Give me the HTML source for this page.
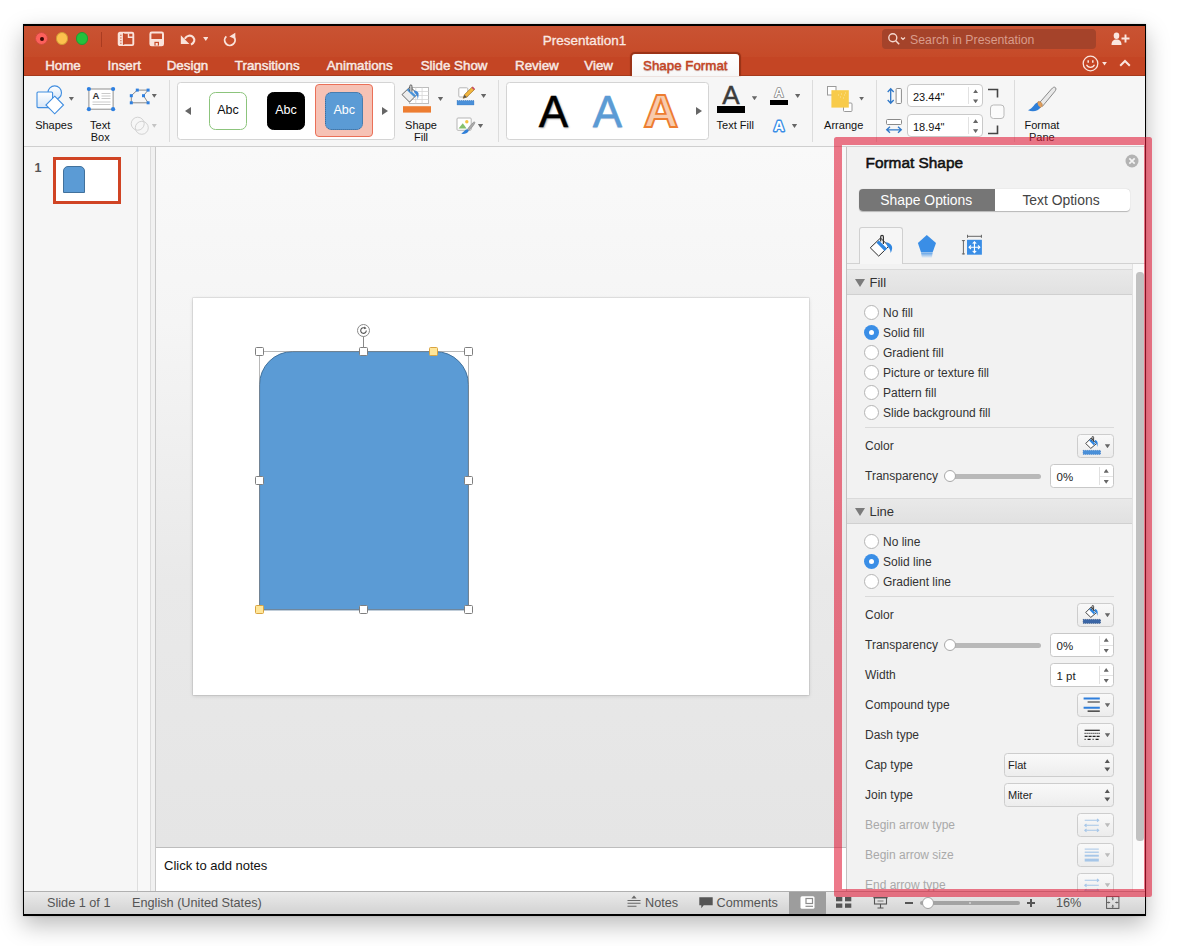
<!DOCTYPE html>
<html><head><meta charset="utf-8">
<style>
*{box-sizing:border-box;margin:0;padding:0}
html,body{width:1177px;height:946px;background:#fff;overflow:hidden;font-family:"Liberation Sans",sans-serif;}
.abs{position:absolute}
#win{position:absolute;left:23px;top:24px;width:1123px;height:892px;background:#000;box-shadow:0 9px 22px rgba(0,0,0,.27),0 0 2px rgba(0,0,0,.18);}
#inner{position:absolute;left:1px;top:2px;width:1121px;height:888px;background:#f6f6f6;overflow:hidden}
/* coordinates inside #inner: page x-24, y-26 */
#title{position:absolute;left:0;top:0;width:1121px;height:31px;background:linear-gradient(#c95333,#c64a28);}
#tabs{position:absolute;left:0;top:31px;width:1121px;height:19px;background:#c44524;border-bottom:1px solid #a63a1c}
.tab{position:absolute;top:32.100px;font-size:13.350px;color:#fbe9e3;white-space:nowrap;-webkit-text-stroke:.5px #fbe9e3;line-height:16px;text-shadow:0 .5px 1px rgba(120,30,10,.5)}
#ribbon{position:absolute;left:0;top:50px;width:1121px;height:71px;background:#f6f6f6;border-bottom:1px solid #cfcfcf}
.lbl{position:absolute;font-size:11px;line-height:12px;color:#111;text-align:center;white-space:nowrap}
.sep{position:absolute;margin-left:-1px;width:1px;background:#dcdcdc;top:54px;height:62px}
.dd{position:absolute;margin-left:.3px;width:5.400px;height:4px;color:#666;background:currentColor;clip-path:polygon(0 0,100% 0,50% 100%)}
.st{top:870px;font-size:12.700px;color:#555;line-height:15px;white-space:nowrap}

.pt{font-size:12px;line-height:15px;margin-top:1px;color:#333;white-space:nowrap}
.pt.dis{color:#a9a9a9}
.rd{left:840px;width:15.300px;height:15.300px;border-radius:8px;background:#fff;border:1px solid #b4b4b4}
.rd.on{background:#3a8ee6;border:none}
.rd.on:after{content:"";position:absolute;left:5px;top:5px;width:5px;height:5px;border-radius:3px;background:#fff}
.hr{left:841px;width:249px;height:1px;background:#dadada}
.pbtn{left:1053.300px;width:36.400px;height:23.400px;margin-top:-.3px;border:1px solid #cdcdcd;border-radius:3.500px;background:linear-gradient(#f9f9f9,#ececec)}
.spin{left:1026px;width:63.800px;height:23.300px;margin-top:-.2px;border:1px solid #c8c8c8;border-radius:3.500px;background:#fff;font-size:11.500px;color:#222}
.spin span{position:absolute;left:5.500px;top:6px;line-height:13px}
.spin i{position:absolute;left:47.600px;top:2px;width:1px;height:17.500px;background:#e0e0e0}
.spin:after{content:"";position:absolute;left:48.500px;top:10.500px;width:13px;height:1px;background:#e4e4e4}
.selb{left:980px;width:110px;height:23.600px;margin-top:-.6px;border:1px solid #cdcdcd;border-radius:3.500px;background:linear-gradient(#f9f9f9,#ededed);font-size:11px;color:#222}
.selb span{position:absolute;left:3px;top:4.600px;line-height:13px}
.seg{top:163px;height:22px;line-height:23px;font-size:13.900px;text-align:center;white-space:nowrap}
.sech{left:823px;width:285px;height:25.500px;background:linear-gradient(#e9e9e9,#e1e1e1);border-top:1px solid #dadada;border-bottom:1px solid #d0d0d0;font-size:13px;color:#333;line-height:25.500px;padding-left:22.500px}
.sech i{position:absolute;left:8px;top:8.500px;width:0;height:0;border-left:5px solid transparent;border-right:5px solid transparent;border-top:8px solid #7b7b7b}

.gal{background:#fff;border:1px solid #d4d4d4;border-radius:3.500px}
.abc{width:38px;height:38px;border-radius:6.500px;font-size:12.500px;line-height:35.500px;text-align:center}
.wa{top:63.500px;width:40px;text-align:center;font-size:44px;line-height:44px}
.rin{margin-left:-1px;margin-top:-.5px;width:76px;height:23.300px;border:1px solid #c9c9c9;border-radius:4px;background:#fff;font-size:11px;color:#111}
.rin span{position:absolute;left:5.500px;top:6px;line-height:13px}
.rin i{position:absolute;left:60.500px;top:2px;width:1px;height:17px;background:#e2e2e2}

.up,.dn{position:absolute;width:5.200px;height:3.900px;background:#666}
.up{clip-path:polygon(50% 0,100% 100%,0 100%)}
.dn{clip-path:polygon(0 0,100% 0,50% 100%)}
.spin .up{left:52.600px;top:3.600px}
.spin .dn{left:52.600px;top:14.600px}
.rin .up{left:65.500px;top:4.200px}
.rin .dn{left:65.500px;top:14.200px}
.selb .up{left:99.400px;top:5.200px;width:5.800px;height:4.200px;background:#555}
.selb .dn{left:99.400px;top:13.300px;width:5.800px;height:4.200px;background:#555}
</style></head><body>
<div id="win"><div id="inner">
<div id="title"></div>
<div id="tabs"></div>
<div id="ribbon"></div>
<div class="abs" style="left:11.4px;top:6.3px;width:12.800px;height:12.800px;border-radius:7px;background:#fc605b;border:1px solid #cf4a40"></div><div class="abs" style="left:31.5px;top:6.3px;width:12.800px;height:12.800px;border-radius:7px;background:#fdc14d;border:1px solid #d09a34"></div><div class="abs" style="left:51.5px;top:6.3px;width:12.800px;height:12.800px;border-radius:7px;background:#24c23c;border:1px solid #1e9e32"></div><div class="abs" style="left:16.1px;top:11.0px;width:3.800px;height:3.800px;margin:-.2px;border-radius:2px;background:#3a0605"></div><div class="abs" style="left:77.0px;top:6px;width:1px;height:15px;background:rgba(140,40,20,.5)"></div><svg class="abs" style="left:93.0px;top:5.0px" width="18" height="16" viewBox="0 0 18 16"><rect x="1.700" y="1.800" width="14.600" height="12.300" rx="1.200" fill="none" stroke="#fae3db" stroke-width="1.900"/><rect x="1.700" y="1.800" width="4.200" height="12.300" fill="#fae3db"/><path d="M3.200 4.200h1.300M3.200 7h1.300M3.200 9.800h1.300M3.200 12.200h1.300" stroke="#c9532f" stroke-width="1.100"/><path d="M6.700 2v12" stroke="#c24a28" stroke-width=".9"/><path d="M11.500 2.500v3.800h4.500" fill="none" stroke="#fae3db" stroke-width="1.400"/></svg><svg class="abs" style="left:125.3px;top:5.0px" width="16" height="16" viewBox="0 0 16 16"><rect x="1.400" y="1.600" width="12.600" height="12.600" rx="1.300" fill="none" stroke="#fae3db" stroke-width="2"/><rect x="1.400" y="8" width="12.600" height="6.200" fill="#fae3db"/><rect x="5.400" y="10.800" width="4.600" height="3.800" fill="#c64a28"/><rect x="6.600" y="12" width="2.200" height="2.600" fill="#fae3db"/></svg><svg class="abs" style="left:155.5px;top:6.0px" width="17" height="15" viewBox="0 0 17 15"><path d="M4.800 6.800c1.800-3.400 6-4.200 8.400-1.600 2.200 2.500 1.200 5.600-2.200 7.400" fill="none" stroke="#fae3db" stroke-width="2.100"/><path d="M0.800 3.300v8.700h8.600z" fill="#fae3db"/></svg><div class="dd" style="left:178.8px;top:11.0px;color:#fae3db;"></div><svg class="abs" style="left:198.5px;top:6.0px" width="14" height="16" viewBox="0 0 14 16"><path d="M3.300 4.400a5.200 5.200 0 1 0 7.800 0.800" fill="none" stroke="#fae3db" stroke-width="1.900"/><path d="M12.300 0.800v6.200l-6-2.600z" fill="#fae3db"/></svg><div class="abs" style="left:0;top:6.500px;width:1121px;text-align:center;font-size:13.500px;color:#fbe9e3;line-height:15px;-webkit-text-stroke:.3px #fbe9e3">Presentation1</div><div class="abs" style="left:858.0px;top:2.900px;width:214px;height:19.800px;border-radius:4px;background:#a5432a"></div><svg class="abs" style="left:863.0px;top:6.0px" width="20" height="14" viewBox="0 0 20 14"><circle cx="5.800" cy="5.800" r="4" fill="none" stroke="#f6d9cf" stroke-width="1.400"/><path d="M8.800 8.800l3.400 3.400" stroke="#f6d9cf" stroke-width="1.600"/><path d="M14 5.500l2 2 2-2" fill="none" stroke="#f6d9cf" stroke-width="1.200"/></svg><div class="abs" style="left:886.0px;top:6.0px;font-size:12.300px;color:#d99c8a;line-height:15px;margin-top:1px;white-space:nowrap">Search in Presentation</div><svg class="abs" style="left:1087.0px;top:6.0px" width="20" height="14" viewBox="0 0 20 14"><ellipse cx="5.500" cy="3.800" rx="2.800" ry="3.300" fill="#fae6df"/><path d="M0.500 13c0-4 2-5.500 5-5.500s5 1.500 5 5.500z" fill="#fae6df"/><path d="M14.500 2.500v8M10.500 6.500h8" stroke="#fae6df" stroke-width="1.900"/></svg><svg class="abs" style="left:1057.5px;top:28.5px" width="17" height="17" viewBox="0 0 17 17"><circle cx="8.500" cy="8.500" r="7.300" fill="none" stroke="#fae6df" stroke-width="1.300"/><path d="M6.200 5.200v2.500M10.800 5.200v2.500" stroke="#fae6df" stroke-width="1.500"/><path d="M4.500 9.800c1.500 3.300 6.500 3.300 8 0" fill="none" stroke="#fae6df" stroke-width="1.300"/></svg><div class="dd" style="left:1077.5px;top:35.5px;color:#fae6df"></div><svg class="abs" style="left:1095.0px;top:33.0px" width="12" height="8" viewBox="0 0 12 8"><path d="M1.200 6.800l4.800-4.800 4.800 4.800" fill="none" stroke="#fae6df" stroke-width="2"/></svg><div class="tab" style="left:21.2px">Home</div><div class="tab" style="left:83.5px">Insert</div><div class="tab" style="left:142.7px">Design</div><div class="tab" style="left:210.8px">Transitions</div><div class="tab" style="left:302.7px">Animations</div><div class="tab" style="left:396.7px">Slide Show</div><div class="tab" style="left:491.0px">Review</div><div class="tab" style="left:560.3px">View</div><div class="abs" style="left:606.0px;top:26.200px;width:111px;height:24.300px;background:linear-gradient(#fff,#f7f7f7);border:2px solid #9b3317;border-bottom:none;border-radius:5px 5px 0 0;box-shadow:0 0 1px #9b3317"></div><div class="tab" style="left:619.0px;color:#c7431f;-webkit-text-stroke:.35px #c7431f">Shape Format</div>
<svg class="abs" style="left:11.0px;top:57.7px" width="30" height="32" viewBox="0 0 30 32"><defs><linearGradient id="g1" x1="0" y1="0" x2="0" y2="1"><stop offset="0" stop-color="#fff"/><stop offset="1" stop-color="#d6e6f7"/></linearGradient></defs><circle cx="19.700" cy="8.700" r="6.800" fill="url(#g1)" stroke="#3f8de0" stroke-width="1.100"/><rect x="2" y="8" width="15.600" height="15.600" rx="1" fill="url(#g1)" stroke="#3f8de0" stroke-width="1.100"/><path d="M19.700 12.200l8.800 8.800-8.800 8.800-8.800-8.800z" fill="#fff" stroke="#3f8de0" stroke-width="1.100"/></svg><div class="dd" style="left:44.4px;top:70.7px;color:#666"></div><div class="lbl" style="left:-0.2px;top:92.9px;width:60px">Shapes</div><svg class="abs" style="left:62.0px;top:60.0px" width="30" height="26" viewBox="0 0 30 26"><rect x="2.900" y="3" width="24.200" height="20.200" fill="#fff" stroke="#8e8e8e" stroke-width="1"/><text x="6.500" y="13.300" font-family="Liberation Sans" font-size="9.500" font-weight="bold" fill="#333">A</text><path d="M15.500 7.500h9M15.500 10h9M15.500 12.500h9M6.500 16h18M6.500 18.500h18" stroke="#c4c4c4" stroke-width=".9"/><g fill="#2f80e0"><circle cx="2.900" cy="3" r="2.100"/><circle cx="27.100" cy="3" r="2.100"/><circle cx="2.900" cy="23.200" r="2.100"/><circle cx="27.100" cy="23.200" r="2.100"/></g></svg><div class="lbl" style="left:46.2px;top:92.9px;width:60px">Text<br>Box</div><svg class="abs" style="left:104.5px;top:62.2px" width="22" height="18" viewBox="0 0 22 18"><path d="M2.300 14.800V7.700l6-5.600h10.800l-4.600 5.600 4.600 7.100z" fill="none" stroke="#8a8a8a" stroke-width="1" stroke-dasharray="0"/><g fill="#2f80e0"><rect x="6.800" y=".6" width="3" height="3"/><rect x="17.600" y=".6" width="3" height="3"/><rect x=".8" y="6.200" width="3" height="3"/><rect x="13" y="6.200" width="3" height="3"/><rect x=".8" y="13.300" width="3" height="3"/><rect x="17.600" y="13.300" width="3" height="3"/></g></svg><div class="dd" style="left:127.3px;top:67.7px;color:#666"></div><svg class="abs" style="left:105.5px;top:90.0px" width="22" height="20" viewBox="0 0 22 20"><circle cx="7.700" cy="7.700" r="6.500" fill="none" stroke="#d2d2d2" stroke-width="1"/><circle cx="11.800" cy="11.800" r="6.500" fill="none" stroke="#d2d2d2" stroke-width="1"/></svg><div class="dd" style="left:127.3px;top:97.7px;color:#c4c4c4"></div><div class="sep" style="left:145.5px"></div><div class="abs gal" style="left:153.3px;top:56.4px;width:217.500px;height:57.800px"></div><div class="abs" style="left:160.5px;top:80.8px;width:0;height:0;border-top:4px solid transparent;border-bottom:4px solid transparent;border-right:6px solid #666"></div><div class="abs" style="left:357.8px;top:80.8px;width:0;height:0;border-top:4px solid transparent;border-bottom:4px solid transparent;border-left:6px solid #666"></div><div class="abs abc" style="left:185.0px;top:66.0px;background:#fff;border:1px solid #8cc47c;color:#111">Abc</div><div class="abs abc" style="left:243.0px;top:66.0px;background:#000;border:1px solid #000;color:#fff">Abc</div><div class="abs" style="left:291.0px;top:58.3px;width:58px;height:53px;background:#f6c2b5;border:1px solid #ea7058;border-radius:4px"></div><div class="abs abc" style="left:301.2px;top:66.0px;background:#5b9bd5;border:1px dotted #35608c;color:#fff">Abc</div><svg class="abs" style="left:376.0px;top:56.0px" width="32" height="32" viewBox="0 0 32 32"><rect x="9.500" y="5.500" width="19" height="16" fill="#fff" stroke="#bdbdbd" stroke-width="1"/><path d="M9.500 9.500h19M9.500 13.500h19M9.500 17.500h19M15.800 5.500v16M22.100 5.500v16" stroke="#d5d5d5" stroke-width=".8"/><path d="M2 12.600L10.100 4.800l7.500 7.100-8.100 8.200z" fill="#ececec" stroke="#666" stroke-width="1" stroke-linejoin="round"/><path d="M8.440 6.400L6.720 8.060l7.580 7.180 1.680-1.700z" fill="#4a93d8"/><path d="M9.900 9.300V3.900a1 1 0 0 1 2 0v5.800" fill="#fff" stroke="#333" stroke-width=".8"/><path d="M13.800 8.400c2.800.2 4.700 1.500 4.800 3.400.1 2-.3 4-1 5.900.2-3-.7-5-3-6.600z" fill="#3f87d6"/><rect x="3" y="24.200" width="28" height="6.400" fill="#ed7d31"/></svg><div class="dd" style="left:413.5px;top:71.0px;color:#666"></div><div class="lbl" style="left:367.0px;top:93.2px;width:60px">Shape<br>Fill</div><svg class="abs" style="left:431.5px;top:59.7px" width="20" height="20" viewBox="0 0 20 20"><rect x="2.800" y="1.800" width="9" height="9.200" rx="1" fill="#fff" stroke="#b5b5b5" stroke-width="1"/><path d="M7.200 12.300l1.200-3.600 7.800-7.600 2.300 2.400-7.800 7.600z" fill="#f3b63e" stroke="#9b6d1c" stroke-width=".7"/><path d="M7.200 12.300l1.200-3.600 2.300 2.400z" fill="#555"/><path d="M16.200 1.100l2.300 2.400" stroke="#c44a6a" stroke-width="1.600"/><rect x="1" y="14.500" width="17" height="4.500" fill="#4a90d9" stroke="#2f6bb0" stroke-width=".5" stroke-dasharray="1 1"/></svg><div class="dd" style="left:456.6px;top:67.9px;color:#666"></div><svg class="abs" style="left:431.5px;top:91.4px" width="20" height="19" viewBox="0 0 20 19"><rect x="1" y="1" width="14.200" height="12.300" rx="1" fill="#fff" stroke="#b5b5b5" stroke-width="1"/><path d="M2.500 11.500l4.300-5.200 3.800 5.200z" fill="#86c06c"/><circle cx="10.800" cy="4.800" r="1.700" fill="#f5c242"/><path d="M18.400 4.800c-.8 0-5.300 4.600-7 7.600l1.300 1.200c2.800-2.400 6.200-6.700 6.200-8.200z" fill="#aaa" stroke="#777" stroke-width=".5"/><path d="M11.200 12.200c-2.200.4-3.300 2.500-6 4.600 3.600.6 7-.8 7.500-3.300z" fill="#2f7fd8"/></svg><div class="dd" style="left:453.5px;top:98.0px;color:#666"></div><div class="sep" style="left:474.6px"></div><div class="abs gal" style="left:481.800px;top:56.1px;width:203.200px;height:57.500px"></div><div class="abs wa" style="left:509.5px;color:#000;-webkit-text-stroke:.5px #000;text-shadow:1px 1px 2px rgba(0,0,0,.4)">A</div><div class="abs wa" style="left:563.5px;color:#5b9bd5;-webkit-text-stroke:.5px #5b9bd5;text-shadow:0 1px 1px rgba(60,110,170,.4)">A</div><div class="abs wa" style="left:617.0px;color:#f8cbad;-webkit-text-stroke:1.800px #ed7d31;font-weight:bold;font-size:45.500px;margin-top:.6px;transform:scaleX(1.06)">A</div><div class="abs" style="left:672.3px;top:80.8px;width:0;height:0;border-top:4px solid transparent;border-bottom:4px solid transparent;border-left:6px solid #666"></div><div class="abs" style="left:691.8px;top:55.3px;width:30px;text-align:center;font-size:26px;line-height:26px;margin-top:.8px;color:#3c3c3c;-webkit-text-stroke:.5px #3c3c3c">A</div><div class="abs" style="left:692.7px;top:80.1px;width:28.500px;height:7px;background:#000"></div><div class="dd" style="left:727.5px;top:70.2px;color:#666"></div><div class="lbl" style="left:681.2px;top:92.9px;width:60px">Text Fill</div><svg class="abs" style="left:745.1px;top:55.600px" width="20" height="20" viewBox="0 0 20 20"><text x="10" y="14.600" text-anchor="middle" font-family="Liberation Sans" font-weight="bold" font-size="13" fill="#fff" stroke="#8a8a8a" stroke-width="1.700" stroke-linejoin="round" paint-order="stroke">A</text></svg><div class="abs" style="left:746.0px;top:74.0px;width:18.200px;height:5px;background:#000"></div><div class="dd" style="left:770.7px;top:68.0px;color:#666"></div><svg class="abs" style="left:745.0px;top:89.4px" width="20" height="20" viewBox="0 0 20 20"><text x="10" y="15.500" text-anchor="middle" font-family="Liberation Sans" font-weight="bold" font-size="14.500" fill="#fff" stroke="#3a8ee6" stroke-width="2.800" stroke-linejoin="round" paint-order="stroke">A</text></svg><div class="dd" style="left:767.5px;top:97.9px;color:#666"></div><div class="sep" style="left:788.8px"></div><svg class="abs" style="left:802.0px;top:59.0px" width="28" height="28" viewBox="0 0 28 28"><rect x="1.500" y="1.500" width="8.500" height="8.500" fill="#fff" stroke="#9a9a9a" stroke-width="1"/><rect x="17.500" y="18" width="8.500" height="8.500" rx="1" fill="#fff" stroke="#9a9a9a" stroke-width="1"/><rect x="5.400" y="5.200" width="17.400" height="17.400" fill="#f8cb4a"/><path d="M12 10h1M15 9h1M18 10h1M14 12h1M17 13h1M19 8h1" stroke="#fbe29a" stroke-width="1"/></svg><div class="dd" style="left:834.6px;top:70.6px;color:#666"></div><div class="lbl" style="left:789.7px;top:93.1px;width:60px">Arrange</div><div class="sep" style="left:852.6px"></div><svg class="abs" style="left:861.5px;top:61.0px" width="18" height="18" viewBox="0 0 18 18"><path d="M4.700 2v14M1.700 5l3-3.300 3 3.300M1.700 13l3 3.300 3-3.300" fill="none" stroke="#2f78c8" stroke-width="1.300"/><rect x="10.100" y="1.500" width="5.300" height="15" rx="1" fill="#fff" stroke="#8a8a8a" stroke-width="1"/></svg><svg class="abs" style="left:861.1px;top:91.5px" width="18" height="16" viewBox="0 0 18 16"><rect x="1.500" y="1.500" width="15" height="5" rx="1" fill="#fff" stroke="#8a8a8a" stroke-width="1"/><path d="M2 11.800h14M5 8.800l-3.300 3 3.300 3M13 8.800l3.300 3-3.300 3" fill="none" stroke="#2f78c8" stroke-width="1.300"/></svg><div class="abs rin" style="left:883.5px;top:58.7px"><span>23.44"</span><i></i><b class="up"></b><b class="dn"></b></div><div class="abs rin" style="left:883.5px;top:88.5px"><span>18.94"</span><i></i><b class="up"></b><b class="dn"></b></div><svg class="abs" style="left:962.5px;top:60.5px" width="20" height="50" viewBox="0 0 20 50"><path d="M1 2.500h9.500v8M1 46.500h9.500v-8" fill="none" stroke="#444" stroke-width="1.600"/><rect x="3.500" y="18" width="13.500" height="13.500" rx="3" fill="#fbfbfb" stroke="#b9b9b9" stroke-width="1"/></svg><div class="sep" style="left:990.6px"></div><svg class="abs" style="left:1002.0px;top:60.0px" width="32" height="28" viewBox="0 0 32 28"><path d="M29 1.300c1.500.8 1.200 2.500-.5 4.500L16.500 20.300l-3.500-3L25.500 3c1.300-1.500 2.500-2.200 3.500-1.700z" fill="#e9e9e9" stroke="#8a8a8a" stroke-width="1"/><path d="M12 15.800c1.800-.8 4.200 1 4.300 3.200-.2 2-2 3.300-4 2.500-1.500-1.500-1.700-4-.3-5.700z" fill="#e0a060" stroke="#b07030" stroke-width=".6"/><path d="M11.500 16.500c-3.500 1-4 5.500-9.500 7.800 5 1.800 10.500.8 12.500-3-1.800-.7-3-2.500-3-4.800z" fill="#2f7fd8"/></svg><div class="lbl" style="left:987.9px;top:93.1px;width:60px">Format<br>Pane</div>

<!-- thumbnail pane -->
<div class="abs" style="left:0;top:121px;width:113px;height:744px;background:#f6f6f6"></div>
<div class="abs" style="left:112.500px;top:121px;width:1px;height:744px;background:#dedede"></div>
<div class="abs" style="left:114px;top:121px;width:12px;height:744px;background:#f8f8f8"></div>
<div class="abs" style="left:126px;top:121px;width:1px;height:744px;background:#dcdcdc"></div>
<div class="abs" style="left:127px;top:121px;width:4px;height:744px;background:#f1f1f1"></div>
<div class="abs" style="left:131px;top:121px;width:1px;height:744px;background:#c9c9c9"></div>
<div class="abs" style="left:10.500px;top:135px;font-size:12.500px;font-weight:bold;color:#555;line-height:14px">1</div>
<div class="abs" style="left:29px;top:131px;width:68px;height:47px;border:3px solid #d04424;background:#fff"></div>
<div class="abs" style="left:39px;top:140px;width:22px;height:27px;background:#5b9bd5;border:1px solid #41719c;border-radius:5px 5px 0 0"></div>
<!-- editing area -->
<div class="abs" id="edit" style="left:132px;top:121px;width:690px;height:701px;background:linear-gradient(#f9f9f9 0,#f5f5f5 25%,#e9e9e9 62%,#e5e5e5 100%)"></div>
<div class="abs" style="left:168.5px;top:272.400px;width:616.300px;height:396.500px;background:#fff;box-shadow:0 0 0 .6px rgba(0,0,0,.12),0 1px 4px rgba(0,0,0,.14)"></div>
<!-- shape -->
<svg class="abs" style="left:225px;top:315px" width="230" height="280" viewBox="225 315 230 280">
<path d="M235.6 583.8V358.6a33 33 0 0 1 33-33h142.8a33 33 0 0 1 33 33v225.2z" fill="#5b9bd5" stroke="#41719c" stroke-width="1"/>
<rect x="235.6" y="325.6" width="208.8" height="258.2" fill="none" stroke="#8a8a8a" stroke-width=".6"/>

<g fill="#fff" stroke="#7f7f7f" stroke-width="1">
<rect x="231.5" y="321.5" width="8" height="8" rx="1"/><rect x="335.5" y="321.5" width="8" height="8" rx="1"/><rect x="440.5" y="321.5" width="8" height="8" rx="1"/>
<rect x="231.5" y="450.5" width="8" height="8" rx="1"/><rect x="440.5" y="450.5" width="8" height="8" rx="1"/>
<rect x="335.5" y="579.5" width="8" height="8" rx="1"/><rect x="440.5" y="579.5" width="8" height="8" rx="1"/>
</g>
<g fill="#ffe699" stroke="#d9a441" stroke-width="1"><rect x="405.5" y="321.5" width="8" height="8" rx="1"/><rect x="231.5" y="579.5" width="8" height="8" rx="1"/></g>
</svg>
<div class="abs" style="left:339px;top:310px;width:1px;height:12px;background:#8a8a8a"></div><svg class="abs" style="left:332px;top:297px" width="15" height="15" viewBox="0 0 15 15"><circle cx="7.5" cy="7.5" r="6" fill="#fff" stroke="#8a8a8a" stroke-width="1"/><path d="M10.3 7.6a2.8 2.8 0 1 1-1-2.2" fill="none" stroke="#555" stroke-width="1.1"/><path d="M8.3 3.6l2.2 1.6-2.4 1z" fill="#555"/></svg>
<!-- notes -->
<div class="abs" style="left:132px;top:821px;width:989px;height:1px;background:#bdbdbd"></div>
<div class="abs" style="left:132px;top:822px;width:989px;height:43px;background:#fff"></div>
<div class="abs" style="left:140px;top:832.500px;font-size:13px;color:#111;line-height:14px">Click to add notes</div>


<div class="abs" id="pane" style="left:823px;top:121px;width:298px;height:744px;background:#f2f2f2"></div>
<div class="abs" style="left:822.300px;top:121px;width:1px;height:744px;background:#c2c2c2"></div>
<div class="abs" style="left:841.500px;top:127.800px;font-size:15.400px;color:#111;line-height:18px;-webkit-text-stroke:.55px #111;white-space:nowrap">Format Shape</div>
<svg class="abs" style="left:1101px;top:128px" width="14" height="14" viewBox="0 0 14 14"><circle cx="7" cy="7" r="6.500" fill="#b3b3b3"/><path d="M4.300 4.300l5.400 5.400M9.700 4.300l-5.400 5.400" stroke="#f4f4f4" stroke-width="1.700"/></svg>
<div class="abs" style="left:835px;top:163px;width:271px;height:22px;background:#fff;border-radius:4px;box-shadow:0 .5px 1px rgba(0,0,0,.25)"></div>
<div class="abs" style="left:835px;top:163px;width:136px;height:22px;background:#767676;border-radius:4px 0 0 4px"></div>
<div class="abs seg" style="left:835px;width:134.500px;color:#fff">Shape Options</div>
<div class="abs seg" style="left:971px;width:132px;color:#444">Text Options</div>
<div class="abs" style="left:823px;top:237px;width:298px;height:1px;background:#d2d2d2"></div>
<div class="abs" style="left:834.800px;top:200.800px;width:43.800px;height:37.200px;background:#f6f6f6;border:1px solid #d0d0d0;border-bottom:none;border-radius:3px 3px 0 0"></div>
<svg class="abs" style="left:836.0px;top:202.0px" width="130" height="34" viewBox="860 228 130 34"><defs><linearGradient id="pr" x1="0" y1="0" x2="0" y2="1"><stop offset="0" stop-color="#3a8ee6" stop-opacity=".75"/><stop offset="1" stop-color="#3a8ee6" stop-opacity="0"/></linearGradient></defs><path d="M870.3 247.800L880.500 238l8.400 8.200-10.200 9.900z" fill="#fff" stroke="#2a2a2a" stroke-width="1" stroke-linejoin="round"/><path d="M876.500 242.700l2.400-2.300 8.200 8.200-2.400 2.300z" fill="#2f86e0"/><path d="M880.700 241.500v-4.800a1.350 1.350 0 0 1 2.700 0v7.300" fill="none" stroke="#333" stroke-width="1.200"/><path d="M885.800 242.200c4.200.6 7 3.500 6.300 6.500-.3 1.700-.8 3.200-1.600 4.400.2-2.800-.8-4.800-3-6.700z" fill="#2f86e0"/><path d="M926.800 235l9.200 7.900-3.400 9.600h-11.500l-3.200-9.600z" fill="#3a8ee6"/><path d="M921.100 253h11.500l-.8 5h-9.900z" fill="url(#pr)"/><rect x="967" y="239.800" width="14.900" height="14.900" fill="#3a8ee6"/><g stroke="#fff" stroke-width="1.100" fill="none"><path d="M974.450 242v10.500M969.200 247.250h10.500"/><path d="M972.700 243.700l1.750-1.800 1.750 1.800M972.700 250.800l1.750 1.800 1.750-1.800M970.900 245.500l-1.800 1.750 1.800 1.750M978 245.500l1.800 1.750-1.800 1.750"/></g><path d="M967 236.300h14.900M967.500 234.800v3M981.400 234.800v3M963.400 240.100v14.300M961.900 240.600h3M961.900 253.900h3" stroke="#666" stroke-width="1" fill="none"/></svg>
<div class="abs sech" style="top:243px;height:26px"><i></i>Fill</div>
<div class="abs sech" style="top:472px;height:26px"><i></i>Line</div>
<div class="abs" style="left:1108px;top:238px;width:1px;height:627px;background:#e2e2e2"></div>
<div class="abs" style="left:1109px;top:238px;width:12px;height:627px;background:#fafafa"></div>
<div class="abs" style="left:1112px;top:245.500px;width:7.500px;height:569.500px;border-radius:3.500px;background:#c1c1c1"></div>
<div class="abs rd" style="top:279.1px"></div><div class="abs pt" style="left:859px;top:279.1px">No fill</div><div class="abs rd on" style="top:299.1px"></div><div class="abs pt" style="left:859px;top:299.1px">Solid fill</div><div class="abs rd" style="top:319.1px"></div><div class="abs pt" style="left:859px;top:319.1px">Gradient fill</div><div class="abs rd" style="top:339.1px"></div><div class="abs pt" style="left:859px;top:339.1px">Picture or texture fill</div><div class="abs rd" style="top:359.1px"></div><div class="abs pt" style="left:859px;top:359.1px">Pattern fill</div><div class="abs rd" style="top:379.1px"></div><div class="abs pt" style="left:859px;top:379.1px">Slide background fill</div><div class="abs hr" style="top:401px"></div><div class="abs pt" style="left:841px;top:412.0px">Color</div><div class="abs pbtn" style="top:408.5px"><svg class="abs" style="left:0;top:0" width="35" height="22" viewBox="1078.3 435.2 35 22"><path d="M1086 443.700L1091.500 438.200l5.200 5.700-5.600 4.700z" fill="#fff" stroke="#333" stroke-width=".9" stroke-linejoin="round"/><path d="M1089.400 440.700l1.700-1.600 4.500 4.800-1.700 1.600z" fill="#2f86e0"/><path d="M1092.300 441.200v-3.700a.8.800 0 0 1 1.600 0v4.600" fill="none" stroke="#333" stroke-width=".9"/><path d="M1095.300 440.300c2.600.6 3.400 2.800 2.200 6.800-.2-2.500-.9-3.900-2.600-4.900z" fill="#2f86e0"/><rect x="1083.400" y="450.600" width="17.400" height="4" fill="#4a90d9" stroke="#2a6fc0" stroke-width=".6" stroke-dasharray="1 1"/></svg><div class="dd" style="left:26.200px;top:9px;color:#666"></div></div><div class="abs pt" style="left:841px;top:442.1px">Transparency</div><div class="abs" style="left:925px;top:447.5px;width:92px;height:5px;border-radius:3px;background:#b9b9b9"></div><div class="abs" style="left:920px;top:444.0px;width:12px;height:12px;border-radius:6px;background:#fff;border:1px solid #a8a8a8"></div><div class="abs spin" style="top:438.5px"><span>0%</span><i></i><b class="up"></b><b class="dn"></b></div><div class="abs rd" style="top:507.7px"></div><div class="abs pt" style="left:859px;top:507.7px">No line</div><div class="abs rd on" style="top:527.7px"></div><div class="abs pt" style="left:859px;top:527.7px">Solid line</div><div class="abs rd" style="top:547.7px"></div><div class="abs pt" style="left:859px;top:547.7px">Gradient line</div><div class="abs hr" style="top:570px"></div><div class="abs pt" style="left:841px;top:581.0px">Color</div><div class="abs pbtn" style="top:577.5px"><svg class="abs" style="left:0;top:0" width="35" height="22" viewBox="1078.3 435.2 35 22"><path d="M1086 443.700L1091.500 438.200l5.200 5.700-5.600 4.700z" fill="#fff" stroke="#333" stroke-width=".9" stroke-linejoin="round"/><path d="M1089.400 440.700l1.700-1.600 4.500 4.800-1.700 1.600z" fill="#2f86e0"/><path d="M1092.300 441.200v-3.700a.8.800 0 0 1 1.600 0v4.600" fill="none" stroke="#333" stroke-width=".9"/><path d="M1095.300 440.300c2.600.6 3.400 2.800 2.200 6.800-.2-2.500-.9-3.900-2.600-4.900z" fill="#2f86e0"/><rect x="1083.400" y="450.600" width="17.400" height="4" fill="#3b66a6" stroke="#24467c" stroke-width=".6" stroke-dasharray="1 1"/></svg><div class="dd" style="left:26.200px;top:9px;color:#666"></div></div><div class="abs pt" style="left:841px;top:611.1px">Transparency</div><div class="abs" style="left:925px;top:616.8px;width:92px;height:5px;border-radius:3px;background:#b9b9b9"></div><div class="abs" style="left:920px;top:613.3px;width:12px;height:12px;border-radius:6px;background:#fff;border:1px solid #a8a8a8"></div><div class="abs spin" style="top:607.5px"><span>0%</span><i></i><b class="up"></b><b class="dn"></b></div><div class="abs pt" style="left:841px;top:641.1px">Width</div><div class="abs spin" style="top:637.5px"><span>1 pt</span><i></i><b class="up"></b><b class="dn"></b></div><div class="abs pt" style="left:841px;top:670.9px">Compound type</div><div class="abs pbtn" style="top:667.5px"><svg class="abs" style="left:0;top:0" width="35" height="22" viewBox="1 1 35 22"><path d="M6.600 5.500h16.200M6.600 14.700h16.200" stroke="#2f7fdc" stroke-width="2"/><path d="M10.600 9h12.200M10.600 18.100h12.200" stroke="#222" stroke-width="1.100"/></svg><div class="dd" style="left:26.200px;top:9px;color:#666"></div></div><div class="abs pt" style="left:841px;top:700.9px">Dash type</div><div class="abs pbtn" style="top:697.5px"><svg class="abs" style="left:0;top:0" width="35" height="22" viewBox="1 1 35 22"><g stroke="#222" stroke-width="1.200"><path d="M7.600 7.300h15.200"/><path d="M7.600 10.300h15.200" stroke-dasharray="1 1"/><path d="M7.600 13.300h15.200" stroke-dasharray="3 1"/><path d="M7.600 16.400h15.200" stroke-dasharray="1 2 3 2"/></g></svg><div class="dd" style="left:26.200px;top:9px;color:#666"></div></div><div class="abs pt" style="left:841px;top:731.0px">Cap type</div><div class="abs selb" style="top:727.7px"><span>Flat</span><b class="up"></b><b class="dn"></b></div><div class="abs pt" style="left:841px;top:761.0px">Join type</div><div class="abs selb" style="top:757.7px"><span>Miter</span><b class="up"></b><b class="dn"></b></div><div class="abs pt dis" style="left:841px;top:791.0px">Begin arrow type</div><div class="abs pbtn" style="top:787.5px"><svg class="abs" style="left:0;top:0" width="35" height="22" viewBox="1 1 35 22"><g stroke="#a6c6e8" stroke-width="1.100" fill="none"><path d="M7.700 7.300h14M20 5.800l1.700 1.500-1.700 1.500"/><path d="M21.800 12.300h-14M9.500 10.800l-1.700 1.500 1.700 1.500"/><path d="M7.900 17.300h13.700M9.500 15.800l-1.700 1.500 1.700 1.500M20 15.800l1.700 1.500-1.700 1.500"/></g></svg><div class="dd" style="left:26.200px;top:9px;color:#bbb"></div></div><div class="abs pt dis" style="left:841px;top:821.0px">Begin arrow size</div><div class="abs pbtn" style="top:817.5px"><svg class="abs" style="left:0;top:0" width="35" height="22" viewBox="1 1 35 22"><g stroke="#a6c6e8" fill="none"><path d="M7.700 6.100h14.100" stroke-width="1"/><path d="M7.700 9.200h14.100" stroke-width="1.200"/><path d="M7.700 12.700h14.100" stroke-width="1.900"/><path d="M7.700 17.100h14.100" stroke-width="2.900"/></g></svg><div class="dd" style="left:26.200px;top:9px;color:#bbb"></div></div><div class="abs pt dis" style="left:841px;top:850.8px">End arrow type</div><div class="abs pbtn" style="top:847.5px"><svg class="abs" style="left:0;top:0" width="35" height="22" viewBox="1 1 35 22"><g stroke="#a6c6e8" stroke-width="1.100" fill="none"><path d="M7.700 7.300h14M20 5.800l1.700 1.500-1.700 1.500"/><path d="M21.800 12.300h-14M9.500 10.800l-1.700 1.500 1.700 1.500"/><path d="M7.900 17.300h13.700M9.500 15.800l-1.700 1.500 1.700 1.500M20 15.800l1.700 1.500-1.700 1.500"/></g></svg><div class="dd" style="left:26.200px;top:9px;color:#bbb"></div></div>

<div class="abs" id="status" style="left:0;top:865px;width:1121px;height:23px;background:linear-gradient(#eaeaea,#d2d2d2);border-top:1px solid #b0b0b0"></div>
<svg class="abs" style="left:603.3px;top:869.3px" width="14" height="13" viewBox="0 0 14 13"><path d="M7 .6l2.600 2.900h-5.200z" fill="#666"/><path d="M.5 5.500h13M.5 8.300h13M.5 11.200h9" stroke="#666" stroke-width="1.100"/></svg><svg class="abs" style="left:674.7px;top:871.2px" width="14" height="12" viewBox="0 0 14 12"><path d="M.3.300h13.400v8h-9l-2.400 3v-3h-2z" fill="#555"/></svg><div class="abs" style="left:765.1px;top:866px;width:36.500px;height:22px;background:#9d9d9d"></div><svg class="abs" style="left:775.6px;top:870.0px" width="15" height="13" viewBox="0 0 15 13"><rect x=".5" y=".3" width="14" height="12.400" rx="1.500" fill="#fff"/><rect x="6" y="2.500" width="6.500" height="5" fill="none" stroke="#8d8d8d" stroke-width="1.200"/><path d="M5.500 10.300h7.500" stroke="#8d8d8d" stroke-width="1.200"/></svg><svg class="abs" style="left:811.8px;top:871.3px" width="16" height="11" viewBox="0 0 16 11"><g fill="#555"><rect x="0" y="0" width="6.300" height="4.300"/><rect x="9" y="0" width="6.300" height="4.300"/><rect x="0" y="6.500" width="6.300" height="4.300"/><rect x="9" y="6.500" width="6.300" height="4.300"/></g></svg><svg class="abs" style="left:848.7px;top:871.3px" width="15" height="12" viewBox="0 0 15 12"><path d="M.3.700h14.400" stroke="#555" stroke-width="1.200"/><rect x="1.500" y=".7" width="12" height="6.300" fill="none" stroke="#555" stroke-width="1.100"/><path d="M4.500 4h6" stroke="#777" stroke-width="1"/><path d="M7.500 7v3.800M4.500 11h6" stroke="#555" stroke-width="1.100"/></svg><div class="abs" style="left:881.0px;top:876.1px;width:7.800px;height:1.800px;background:#555"></div><div class="abs" style="left:896.4px;top:874.9px;width:99.500px;height:4.200px;border-radius:2px;background:#a3a3a3"></div><div class="abs" style="left:945.0px;top:876.0px;width:2px;height:2px;background:#c8c8c8"></div><div class="abs" style="left:897.9px;top:870.7px;width:12.400px;height:12.400px;border-radius:7px;background:#fff;border:1px solid #a0a0a0"></div><div class="abs" style="left:1002.6px;top:876.1px;width:8.400px;height:1.800px;background:#555"></div><div class="abs" style="left:1005.9px;top:872.8px;width:1.800px;height:8.400px;background:#555"></div><svg class="abs" style="left:1081.6px;top:870.2px" width="14" height="13" viewBox="0 0 14 13"><rect x=".6" y=".6" width="12.300" height="11.800" fill="none" stroke="#555" stroke-width="1"/><path d="M6.750 1v3.200M6.750 12v-3.200M1 6.500h3M12.500 6.500h-3" stroke="#666" stroke-width="1"/><path d="M5.700 2.600l1.050 1 1.050-1M5.700 10.400l1.050-1 1.050 1M2.700 5.500l1 1-1 1M10.800 5.500l-1 1 1 1" fill="none" stroke="#666" stroke-width=".8"/></svg><div class="abs st" style="left:23px">Slide 1 of 1</div>
<div class="abs st" style="left:108px">English (United States)</div>
<div class="abs st" style="left:621px">Notes</div>
<div class="abs st" style="left:692.5px">Comments</div>
<div class="abs st" style="left:1032px">16%</div>

</div></div>
<div class="abs" style="left:834px;top:137px;width:318px;height:760px;border:8px solid rgba(224,25,55,.585);border-radius:2.500px"></div>
</body></html>
